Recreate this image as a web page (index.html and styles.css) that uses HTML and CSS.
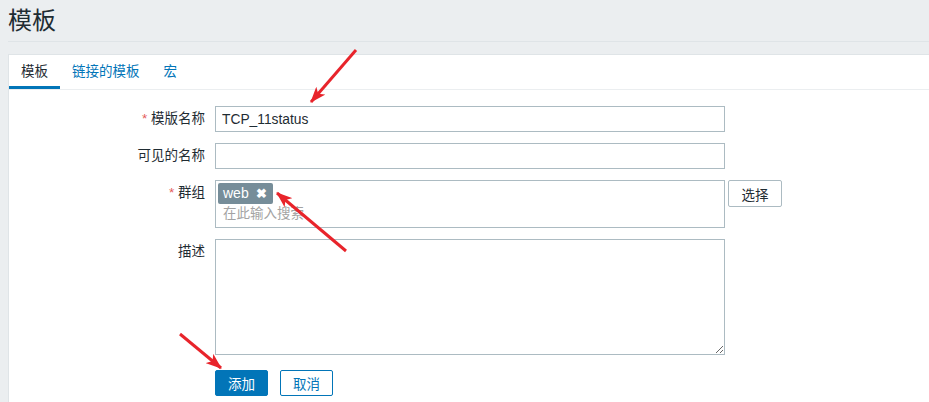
FILE: index.html
```html
<!DOCTYPE html>
<html lang="zh-CN">
<head>
    <meta charset="UTF-8">
    <meta name="viewport" content="width=device-width, initial-scale=1.0">
    <title>模板</title>
    <link rel="stylesheet" href="styles.css">
</head>
<body>
    <div class="page">
        <header class="page-header">
            <h1>模板</h1>
        </header>

        <div class="card">
            <ul class="tabs">
                <li class="tab active">模板</li>
                <li class="tab">链接的模板</li>
                <li class="tab">宏</li>
            </ul>

            <form class="template-form" onsubmit="return false">
                <div class="form-row">
                    <label class="form-label" for="name"><span class="required">*</span> 模版名称</label>
                    <input class="text-input" type="text" id="name" value="TCP_11status">
                </div>

                <div class="form-row">
                    <label class="form-label" for="visible">可见的名称</label>
                    <input class="text-input" type="text" id="visible">
                </div>

                <div class="form-row">
                    <label class="form-label"><span class="required">*</span> 群组</label>
                    <div class="multiselect-wrap">
                        <div class="multiselect">
                            <span class="tag">web <span class="tag-remove">&#10006;</span></span>
                            <div class="ms-placeholder">在此输入搜索</div>
                        </div>
                        <button type="button" class="btn-alt">选择</button>
                    </div>
                </div>

                <div class="form-row row-textarea">
                    <label class="form-label" for="desc">描述</label>
                    <textarea class="textarea" id="desc"></textarea>
                </div>

                <div class="form-row row-buttons">
                    <span></span>
                    <div class="buttons">
                        <button type="submit" class="btn-primary">添加</button>
                        <button type="button" class="btn-secondary">取消</button>
                    </div>
                </div>
            </form>
        </div>
    </div>

    <!-- red annotation arrows over the screenshot -->
    <svg class="annotations" width="929" height="402" viewBox="0 0 929 402">
        <defs>
            <marker id="head" markerUnits="userSpaceOnUse" markerWidth="16" markerHeight="12" refX="15" refY="6" orient="auto">
                <path d="M0,0 L16,6 L0,12 L4,6 z" fill="#e8242b"/>
            </marker>
        </defs>
        <line x1="356" y1="50" x2="311" y2="102" stroke="#e8242b" stroke-width="3" marker-end="url(#head)"/>
        <line x1="346" y1="251" x2="277" y2="193" stroke="#e8242b" stroke-width="3" marker-end="url(#head)"/>
        <line x1="180" y1="334" x2="221" y2="368" stroke="#e8242b" stroke-width="3" marker-end="url(#head)"/>
    </svg>
</body>
</html>
```

FILE: styles.css
```css
body {
    margin: 0;
    background-color: #ebeef0;
    font-family: "Liberation Sans", "Noto Sans CJK SC", sans-serif;
    font-size: 13.5px;
    color: #1f2c33;
    overflow: hidden;
}
.page {
    padding-left: 8px;
}
.page-header {
    height: 41px;
    display: flex;
    align-items: center;
    border-bottom: 1px solid #dfe4e7;
}
.page-header h1 {
    margin: 0;
    font-size: 24px;
    font-weight: normal;
    line-height: 1;
}
.card {
    margin-top: 12px;
    background-color: white;
    border: 1px solid #dfe4e7;
    border-right: none;
    border-bottom: none;
    height: 348px;
}
.tabs {
    display: flex;
    list-style: none;
    margin: 0;
    padding: 0;
    border-bottom: 1px solid #ebeef0;
}
.tab {
    padding: 8px 12px 6px;
    line-height: 17px;
    color: #0275b8;
    border-bottom: 3px solid transparent;
}
.tab.active {
    color: #1f2c33;
    border-bottom-color: #0275b8;
}
.template-form {
    padding-top: 16px;
}
.form-row {
    display: grid;
    grid-template-columns: 196px 510px auto;
    column-gap: 10px;
    align-items: start;
    margin-bottom: 11px;
}
.form-row .multiselect-wrap {
    grid-column: 2 / 4;
}
.row-textarea {
    margin-top: 1px;
    margin-bottom: 15px;
}
.row-buttons {
    margin-bottom: 0;
}
.form-label {
    text-align: right;
    line-height: 26px;
    white-space: nowrap;
}
.required {
    color: #e45959;
}
.text-input {
    box-sizing: border-box;
    height: 26px;
    width: 510px;
    margin: 0;
    padding: 0 6px;
    border: 1px solid #acbbc2;
    font: inherit;
    font-size: 13.8px;
    color: #1f2c33;
    outline: none;
}
.multiselect-wrap {
    display: flex;
    align-items: flex-start;
    gap: 3px;
}
.multiselect {
    box-sizing: border-box;
    width: 510px;
    height: 48px;
    border: 1px solid #acbbc2;
    padding: 2px 2px 0;
}
.tag {
    display: inline-flex;
    align-items: center;
    gap: 7px;
    height: 21px;
    padding: 0 6px 0 5px;
    background-color: #768d99;
    color: white;
    border-radius: 2px;
    font-size: 14px;
    line-height: 21px;
}
.tag-remove {
    font-size: 13px;
    font-weight: bold;
}
.ms-placeholder {
    padding-left: 5px;
    line-height: 20px;
    color: #a3a3a3;
}
.btn-alt {
    box-sizing: border-box;
    height: 27px;
    width: 54px;
    margin: 0;
    padding: 0;
    background-color: white;
    border: 1px solid #acbbc2;
    border-radius: 2px;
    font: inherit;
    color: #1f2c33;
}
.textarea {
    box-sizing: border-box;
    width: 510px;
    height: 116px;
    margin: 0;
    padding: 4px 6px;
    border: 1px solid #acbbc2;
    font: inherit;
    resize: vertical;
    outline: none;
}
.buttons {
    display: flex;
    gap: 12px;
}
.btn-primary, .btn-secondary {
    box-sizing: border-box;
    height: 26px;
    width: 53px;
    padding: 0;
    border-radius: 2px;
    border: 1px solid #0275b8;
    font: inherit;
    cursor: pointer;
}
.btn-primary {
    background-color: #0275b8;
    color: white;
}
.btn-secondary {
    background-color: white;
    color: #0275b8;
}
.annotations {
    position: absolute;
    left: 0;
    top: 0;
    pointer-events: none;
}
```
